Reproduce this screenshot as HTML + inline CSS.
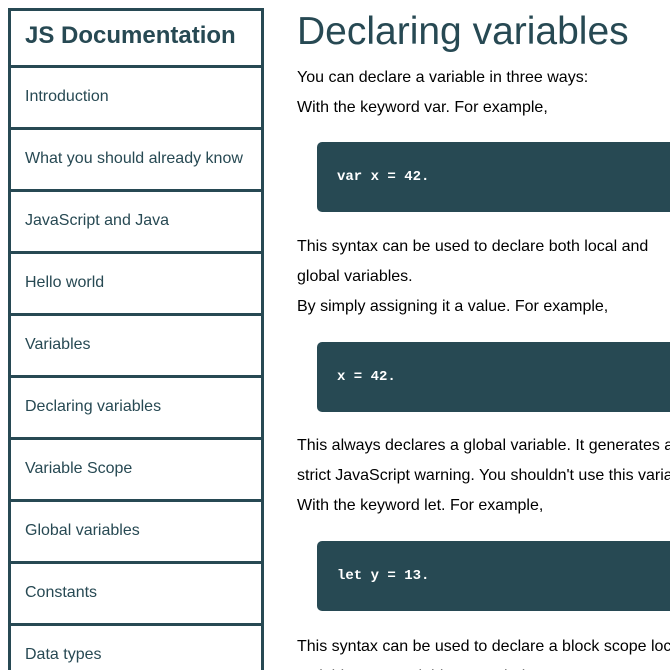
<!DOCTYPE html>
<html style="height:670px;overflow:hidden"><head><style>
*{margin:0;padding:0;box-sizing:border-box}
body{width:670px;height:670px;overflow:hidden;background:#fff;font-family:"Liberation Sans",Arial,sans-serif;color:#000;position:relative}
nav{position:absolute;left:8px;top:8px;width:256px;height:662px;overflow:hidden;border:3px solid #274953;border-bottom:none}
nav h1{height:57px;font-size:24px;color:#274953;padding-left:14px;line-height:50px;border-bottom:3px solid #274953}
nav div{height:62px;border-bottom:3px solid #274953;font-size:16px;color:#274953;padding-left:14px;line-height:57px}
main{position:absolute;left:297px;top:0;width:373px;height:670px;overflow:hidden;white-space:nowrap}
h2{font-size:39px;font-weight:normal;color:#274953;position:absolute;top:10px;left:0}
p{position:absolute;left:0;font-size:16px;line-height:30px}
.c{position:absolute;left:20px;width:400px;height:70px;background:#274953;border-radius:5px;color:#fff;font-family:"Liberation Mono",monospace;font-weight:bold;font-size:14px;line-height:70px;padding-left:20px}
</style></head><body>
<nav><h1>JS Documentation</h1>
<div>Introduction</div><div>What you should already know</div><div>JavaScript and Java</div><div>Hello world</div><div>Variables</div><div>Declaring variables</div><div>Variable Scope</div><div>Global variables</div><div>Constants</div><div>Data types</div></nav>
<main>
<h2>Declaring variables</h2>
<p style="top:63px">You can declare a variable in three ways:<br>With the keyword var. For example,</p>
<div class="c" style="top:142px">var x = 42.</div>
<p style="top:232px">This syntax can be used to declare both local and<br>global variables.<br>By simply assigning it a value. For example,</p>
<div class="c" style="top:342px">x = 42.</div>
<p style="top:431px">This always declares a global variable. It generates a<br>strict JavaScript warning. You shouldn't use this variant.<br>With the keyword let. For example,</p>
<div class="c" style="top:541px">let y = 13.</div>
<p style="top:632px">This syntax can be used to declare a block scope local<br>variable. See Variable scope below.</p>
</main>
</body></html>
